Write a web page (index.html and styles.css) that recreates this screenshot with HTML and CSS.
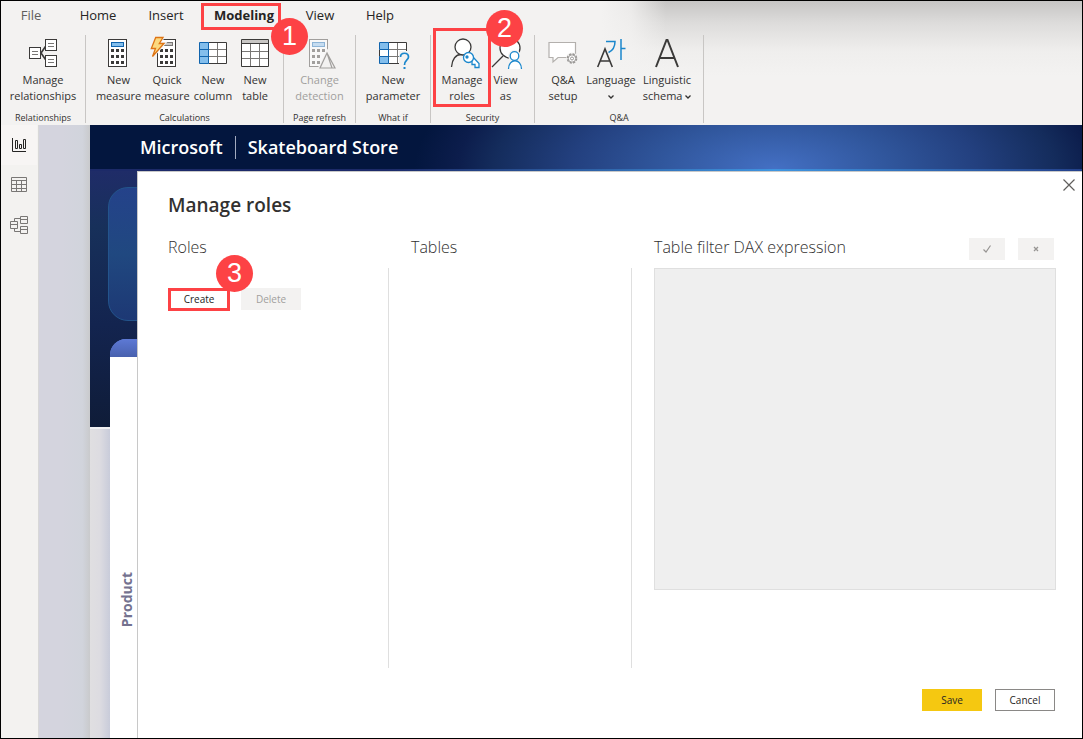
FILE: index.html
```html
<!DOCTYPE html>
<html lang="en">
<head>
<meta charset="utf-8">
<meta name="viewport" content="width=device-width, initial-scale=1">
<title>Manage roles</title>
<link rel="stylesheet" href="styles.css">
</head>
<body>
<div class="app">
  <header class="ribbon">
    <nav class="tabs">
      <button class="tab tab-file">File</button>
      <button class="tab tab-home">Home</button>
      <button class="tab tab-insert">Insert</button>
      <button class="tab tab-modeling active">Modeling<span class="mark mark-tab"></span><span class="badge badge-tab">1</span></button>
      <button class="tab tab-view">View</button>
      <button class="tab tab-help">Help</button>
    </nav>
    <div class="groups">
      <section class="group">
        <div class="tools">
          <button class="tool w-relations">
            <svg class="icon" viewBox="0 0 28 28"><g fill="#fff" stroke="#3b3a39"><path d="M16.500 7.500L12 14l4.500 6.500" fill="none" stroke-width="1.700"/><rect x=".5" y="8.500" width="11" height="11"/><rect x="16.500" y=".5" width="11" height="11"/><rect x="16.500" y="16.500" width="11" height="11"/></g><path d="M3 12.500h6M3 15.500h6M19 4.500h6M19 7.500h6M19 20.500h6M19 23.500h6" stroke="#797775"/></svg>
            <span>Manage<br>relationships</span>
          </button>
        </div>
        <h2 class="group-name">Relationships</h2>
      </section>
      <section class="group">
        <div class="tools">
          <button class="tool w-measure">
            <svg class="icon" viewBox="0 0 28 28"><rect x="3.500" y=".5" width="18" height="27" fill="#fff" stroke="#3b3a39"/><rect x="6.500" y="3.500" width="12" height="4" fill="#83beec" stroke="#1064ad"/><path d="M6 11.500h3m2 0h3m2 0h3M6 17.500h3m2 0h3m2 0h3M6 23.500h3m2 0h3m2 0h3" stroke="#3b3a39" stroke-width="3"/></svg>
            <span>New<br>measure</span>
          </button>
          <button class="tool w-quick">
            <svg class="icon" viewBox="0 0 28 28"><rect x="4.500" y=".5" width="18" height="27" fill="#fff" stroke="#3b3a39"/><rect x="8.500" y="3.500" width="11" height="3" fill="#c8c6c4" stroke="#797775"/><path d="M7 11.500h3m2 0h3m2 0h3M7 17.500h3m2 0h3m2 0h3M7 23.500h3m2 0h3m2 0h3" stroke="#3b3a39" stroke-width="3"/><path d="M2.700-1.500H10L6.300 4.500h4.700L-.5 17.500 2.500 9.500h-4.200z" fill="#f9d67a" stroke="#f3f2f1" stroke-width="3"/><path d="M2.700-1.500H10L6.300 4.500h4.700L-.5 17.500 2.500 9.500h-4.200z" fill="#fbd97f" stroke="#de7414" stroke-width="1.300"/></svg>
            <span>Quick<br>measure</span>
          </button>
          <button class="tool w-column">
            <svg class="icon" viewBox="0 0 28 28"><rect x=".5" y="3.500" width="27" height="21" fill="#fff"/><path d="M9.500 10.500h18m-18 7h18M18.500 3.500v21" stroke="#797775" fill="none"/><path d="M9.500 3.500h18v21h-18" stroke="#3b3a39" fill="none"/><path d="M.5 3.500h9v21h-9zm0 7h9m-9 7h9" fill="#83beec" stroke="#1064ad"/></svg>
            <span>New<br>column</span>
          </button>
          <button class="tool w-table">
            <svg class="icon" viewBox="0 0 28 28"><path d="M.5.5h27v27H.5z" fill="#fff"/><path d="M.5.5h27v4H.5z" fill="#c8c6c4"/><path d="M.5 12.500h27M.5 19.500h27M9.500 4.500v23m9-23v23" stroke="#797775"/><path d="M.5.5h27v27H.5zM.5 4.500h27" fill="none" stroke="#3b3a39"/></svg>
            <span>New<br>table</span>
          </button>
        </div>
        <h2 class="group-name">Calculations</h2>
      </section>
      <section class="group">
        <div class="tools">
          <button class="tool w-change" disabled>
            <svg class="icon" viewBox="0 0 28 28"><rect x="3.500" y=".5" width="18" height="27" fill="#f8f8f8" stroke="#a19f9d"/><rect x="6.500" y="3.500" width="12" height="4" fill="#c5dcf0" stroke="#8db4d6"/><path d="M6 11.500h3m2 0h3m2 0h3M6 17.500h3m2 0h3M6 23.500h3m2 0h3" stroke="#a19f9d" stroke-width="3"/><path d="M21.500 13l-8 16h16z" fill="#f3f2f1" stroke="#f3f2f1" stroke-width="3"/><path d="M21 14l-7 15h15zM21 14l5 15" fill="#f3f2f1" stroke="#a19f9d" stroke-width="1.200"/></svg>
            <span>Change<br>detection</span>
          </button>
        </div>
        <h2 class="group-name">Page refresh</h2>
      </section>
      <section class="group">
        <div class="tools">
          <button class="tool w-parameter">
            <svg class="icon" viewBox="0 0 28 28"><path d="M.5 3.500h27v21H.5z" fill="#fff"/><path d="M9.500 10.500h18m-27 7h27M18.500 3.500v21" stroke="#797775"/><path d="M9.500 3.500h18v21h-18" fill="none" stroke="#3b3a39"/><path d="M.5 10.500v7" stroke="#3b3a39"/><path d="M.5 3.500h9v7h-9zM.5 17.500h9v7h-9zM9.500 10v8" fill="#83beec" stroke="#1064ad"/><path d="M20 12h11v18H20z" fill="#f3f2f1"/><path d="M21.500 18c0-5 8-5 8 0 0 3-4 3-4 8" fill="none" stroke="#1b87cc" stroke-width="1.700"/><path d="M24.500 28h2v2h-2z" fill="#1b87cc"/></svg>
            <span>New<br>parameter</span>
          </button>
        </div>
        <h2 class="group-name">What if</h2>
      </section>
      <section class="group">
        <div class="tools">
          <button class="tool w-manage">
            <svg class="icon" viewBox="0 0 28 28"><g fill="none" stroke="#3b3a39" stroke-width="1.300"><path d="M3.500 28C4 20 8 15.500 13 15.500h4" fill="none"/><circle cx="15" cy="8" r="8" fill="#fff"/></g><g fill="#fff" stroke="#1b87cc" stroke-width="1.300"><path d="M24.500 17.500l6.500 7v4h-4v-3h-3v-3l-2-1.500z"/><circle cx="20.500" cy="18.500" r="5"/><circle cx="19" cy="18" r="1" fill="#1b87cc"/></g></svg>
            <span>Manage<br>roles</span>
            <span class="mark mark-tool"></span>
          </button>
          <button class="tool w-viewas">
            <svg class="icon" viewBox="0 0 28 28"><path d="M0 28l11-11" stroke="#3b3a39" stroke-width="1.300"/><circle cx="18" cy="9" r="10" fill="#fff" stroke="#3b3a39" stroke-width="1.300"/><g fill="#fff" stroke="#f3f2f1" stroke-width="4"><circle cx="22.500" cy="17" r="4.300"/><path d="M16.500 30c0-11 13-11 13 0"/></g><g fill="#fff" stroke="#1b87cc" stroke-width="1.300"><path d="M16.500 30c0-11 13-11 13 0"/><circle cx="22.500" cy="17" r="4.300"/></g></svg>
            <span>View<br>as</span>
            <span class="badge badge-tool">2</span>
          </button>
        </div>
        <h2 class="group-name">Security</h2>
      </section>
      <section class="group">
        <div class="tools">
          <button class="tool w-setup">
            <svg class="icon" viewBox="0 0 28 28"><path d="M0 3.500h26.500v15H9L4 23v-4.500H0z" fill="#fff" stroke="#b3b0ad" stroke-width="1.200"/><circle cx="23" cy="19.500" r="6" fill="#f3f2f1"/><circle cx="23" cy="19.500" r="4.500" fill="none" stroke="#979593" stroke-width="1.600" stroke-dasharray="2.200 1.334"/><circle cx="23" cy="19.500" r="3.700" fill="#fff" stroke="#979593"/><circle cx="23" cy="19.500" r="1.500" fill="none" stroke="#979593"/></svg>
            <span>Q&amp;A<br>setup</span>
          </button>
          <button class="tool w-language">
            <svg class="icon" viewBox="0 0 28 28"><path d="M.7 28L8 10l7.300 18M3 22h10" fill="none" stroke="#3b3a39" stroke-width="1.600"/><path d="M9 2.500h9c0 5-2 9-6.500 11M24 0v21M24 9.500h4.500" fill="none" stroke="#1b87cc" stroke-width="1.500"/></svg>
            <span>Language<br><svg class="chevron" viewBox="0 0 6 4"><path d="M.5.5L3 3 5.500.5"/></svg></span>
          </button>
          <button class="tool w-linguistic">
            <svg class="icon" viewBox="0 0 28 28"><path d="M3 28L13.500 1h1L25 28M7 19h14" fill="none" stroke="#3b3a39" stroke-width="2"/></svg>
            <span>Linguistic<br>schema <svg class="chevron" viewBox="0 0 6 4"><path d="M.5.5L3 3 5.500.5"/></svg></span>
          </button>
        </div>
        <h2 class="group-name">Q&amp;A</h2>
      </section>
    </div>
  </header>

  <div class="workspace">
    <nav class="rail">
      <button class="rail-button current" aria-label="Report view"><svg width="20" height="20" viewBox="0 0 20 20"><path d="M3.500 3v13.500H17M6.500 5.500h2v8h-2zM10.500 9.500h2v4h-2zM14.500 4.500h2v9h-2z" fill="none" stroke="#252423"/></svg></button>
      <button class="rail-button" aria-label="Data view"><svg width="20" height="20" viewBox="0 0 20 20"><path d="M2.500 2.500h15v14h-15zM2.500 5.500h15M2.500 9.500h15M2.500 13.500h15M7.500 5.500v11M12.500 5.500v11" fill="none" stroke="#797775"/></svg></button>
      <button class="rail-button" aria-label="Model view"><svg width="20" height="20" viewBox="0 0 20 20"><path d="M1.500 6.500h7v7h-7zM1.500 9.500h7M11.500 1.500h7v7h-7zM11.500 4.500h7M11.500 11.500h7v7h-7zM11.500 14.500h7M5.500 6.500v-3h6M5.500 13.500v3h6" fill="none" stroke="#797775"/></svg></button>
    </nav>
    <div class="gutter"></div>
    <main class="report">
      <div class="banner"><span>Microsoft</span><i class="banner-rule"></i><span>Skateboard Store</span></div>
      <div class="stage">
        <aside class="strip">
          <div class="strip-hero"></div>
          <div class="strip-tile"></div>
          <div class="strip-card"><div class="strip-cap"></div><span class="strip-label">Product</span></div>
        </aside>
        <section class="dialog" role="dialog" aria-labelledby="dialog-title">
          <button class="close" aria-label="Close"><svg width="12" height="12" viewBox="0 0 12 12"><path d="M.5.5l11 11M11.500.5l-11 11" stroke="#605e5c" stroke-width="1.200"/></svg></button>
          <h1 class="title" id="dialog-title">Manage roles</h1>
          <div class="columns">
            <section class="column">
              <h2 class="heading">Roles</h2>
              <div class="pane">
                <button class="button create">Create<span class="badge badge-create">3</span></button>
                <button class="button muted" disabled>Delete</button>
              </div>
            </section>
            <section class="column">
              <h2 class="heading">Tables</h2>
              <div class="pane"></div>
            </section>
            <section class="column">
              <div class="heading">
                <label for="dax">Table filter DAX expression</label>
                <div class="checks">
                  <button class="button muted small" disabled aria-label="Verify"><svg width="8" height="8" viewBox="0 0 8 8"><path d="M.5 4.500L3 7l4.500-6.500" fill="none" stroke="#979593" stroke-width="1.200"/></svg></button>
                  <button class="button muted small" disabled aria-label="Revert"><svg width="6" height="6" viewBox="0 0 6 6"><path d="M1 1l4 4M5 1L1 5" stroke="#979593" stroke-width="1.300"/></svg></button>
                </div>
              </div>
              <textarea class="expression" id="dax" disabled></textarea>
            </section>
          </div>
          <footer class="actions">
            <button class="button primary">Save</button>
            <button class="button outlined">Cancel</button>
          </footer>
        </section>
      </div>
    </main>
  </div>
</div>
</body>
</html>
```

FILE: styles.css
```css
* { box-sizing: border-box; }
body { margin: 0; font-family: "Open Sans", "Noto Sans", sans-serif; color: #323130; }
button { font: inherit; color: inherit; border: 0; padding: 0; margin: 0; background: none; }
h1, h2 { margin: 0; font-weight: 400; }

.app { display: flex; flex-direction: column; min-height: 100vh; border: 1px solid #000; }

/* Ribbon */
.ribbon {
  height: 124px;
  background:
    linear-gradient(to right, #f3f2f1 600px, rgba(243, 242, 241, .8) 630px, rgba(243, 242, 241, 0) 665px),
    linear-gradient(#c6c5c4, #dddcdb 22px, #efeeed 50px, #f3f2f1 75px);
}
.tabs { display: flex; height: 34px; }
.tab { position: relative; height: 29px; padding-bottom: 2px; font-size: 13px; text-align: center; color: #252423; }
.tab.active { font-weight: 700; }
.tab-file { width: 60px; color: #605e5c; }
.tab-home { width: 74px; }
.tab-insert { width: 62px; }
.tab-modeling { width: 94px; }
.tab-view { width: 58px; }
.tab-help { width: 62px; }

.groups { display: flex; }
.group { display: flex; flex-direction: column; height: 88px; padding: 0 8px; border-right: 1px solid #c8c6c4; }
.tools { display: flex; height: 77px; }
.tool {
  position: relative;
  display: flex;
  flex-direction: column;
  align-items: center;
  padding-top: 4px;
  font-size: 11px;
  line-height: 16px;
  text-align: center;
  white-space: nowrap;
}
.tool:disabled { color: #a19f9d; }
.icon { width: 28px; height: 28px; margin-bottom: 5px; overflow: visible; flex: none; }
.w-relations { width: 68px; }
.w-measure { width: 49px; }
.w-quick { width: 48px; }
.w-column { width: 44px; }
.w-table { width: 40px; }
.w-change { width: 55px; }
.w-parameter { width: 58px; }
.w-manage { width: 46px; }
.w-viewas { width: 41px; }
.w-setup { width: 40px; }
.w-language, .w-linguistic { width: 56px; }
.tool > span:not(.badge):not(.mark) { display: block; }
.chevron { width: 6px; height: 4px; vertical-align: middle; fill: none; stroke: #323130; stroke-width: 1.3; }
.group-name { font-size: 9px; line-height: 11px; text-align: center; white-space: nowrap; }

/* Step markers */
.mark { position: absolute; border: 3px solid #fd4245; }
.mark-tab { inset: 2px 10px 0 4px; }
.mark-tool { inset: -7px -6px 5px -6px; }
.badge {
  position: absolute;
  z-index: 2;
  width: 37px;
  height: 37px;
  border-radius: 50%;
  background: #fd4245;
  color: #fff;
  font: 400 27px/37px "Liberation Sans", sans-serif;
  text-align: center;
}
.badge-tab { left: 74px; top: 17px; }
.badge-tool { left: 1px; top: -25px; }
.badge-create { right: -26px; top: -36px; }

/* Workspace */
.workspace { display: flex; flex: 1; }
.rail { width: 38px; border-right: 1px solid #d8d8d8; background: #f3f2f0; }
.rail-button { display: grid; place-items: center; width: 36px; height: 40px; }
.rail-button.current { background: #f7f5f4; }
.gutter { width: 51px; background: linear-gradient(to right, #d4d4de 45%, #d1d4dc 85%, #c9cacc); }
.report { display: flex; flex: 1; flex-direction: column; min-width: 0; }
.banner {
  display: flex;
  align-items: center;
  gap: 12px;
  height: 46px;
  padding-left: 50px;
  border-bottom: 2px solid;
  border-image: linear-gradient(to right, #1c2a68 30%, #3f95e0 69%, #23408a) 1;
  background: radial-gradient(ellipse 360px 150px at 69% 100%, #4470c4, #30569c 32%, #23407f 56%, #142c5c 78%, #0c1d4c 88%, #03163e);
  color: #fff;
  font-size: 18px;
  font-weight: 600;
}
.banner-rule { width: 1px; height: 23px; background: #a3abc0; }

.stage { display: flex; flex: 1; }
.strip { position: relative; width: 47px; overflow: hidden; background: linear-gradient(to right, #e0dfe1, #dddce1 20%, #c9ccda 42%); }
.strip-hero { height: 258px; border-bottom: 2px solid #f0f0f2; background: linear-gradient(#1f2c68, #17305a 22%, #13244f 60%, #0f1c38); }
.strip-tile { position: absolute; top: 16px; left: 18px; width: 60px; height: 134px; border: 1px solid #23548c; border-radius: 20px; background: linear-gradient(#24428a, #204880 50%, #1d3874); }
.strip-card { position: absolute; top: 168px; bottom: 0; left: 20px; right: 0; border-top-left-radius: 16px; overflow: hidden; background: linear-gradient(#5d79d5 17px, #fff 18px); }
.strip-cap { height: 18px; background: linear-gradient(#5d79d5, #4861ae); }
.strip-label { position: absolute; right: 2px; top: 233px; writing-mode: vertical-rl; transform: rotate(180deg); font-size: 14px; line-height: 16px; font-weight: 700; color: #74728f; }

/* Dialog */
.dialog { position: relative; display: flex; flex: 1; flex-direction: column; min-width: 0; padding: 19px 26px 27px 30px; border: solid #c8c8c8; border-width: 1px 0 0 1px; background: #fff; }
.close { position: absolute; top: 7px; right: 7px; width: 12px; height: 12px; display: grid; }
.title { font-size: 19px; line-height: 28px; font-weight: 600; }
.columns { display: grid; grid-template-columns: 221px 221px 1fr; gap: 22px; flex: 1; margin-top: 7px; }
.column { display: flex; flex-direction: column; }
.heading { display: flex; align-items: center; justify-content: space-between; height: 42px; font-size: 16px; font-weight: 300; color: #323130; }
.pane { display: flex; flex: 1; gap: 11px; align-items: flex-start; padding-top: 20px; border-right: 1px solid #dfdfdf; }
.checks { display: flex; gap: 13px; padding: 4px 2px 0 0; }
.button { width: 60px; height: 22px; font-size: 10px; line-height: 20px; text-align: center; }
.button.small { display: grid; place-items: center; width: 36px; }
.muted { background: #f3f2f1; color: #a19f9d; }
.create { position: relative; width: 62px; height: 23px; line-height: 17px; border: 3px solid #fd4245; background: #fff; color: #252423; }
.expression { width: 100%; height: 322px; resize: none; border: 1px solid #dfdfdf; background: #efefef; }
.actions { display: flex; justify-content: flex-end; gap: 13px; margin-top: 21px; padding-right: 1px; }
.primary { background: #f5c811; color: #252423; }
.outlined { border: 1px solid #8a8886; background: #fff; color: #252423; }
```
